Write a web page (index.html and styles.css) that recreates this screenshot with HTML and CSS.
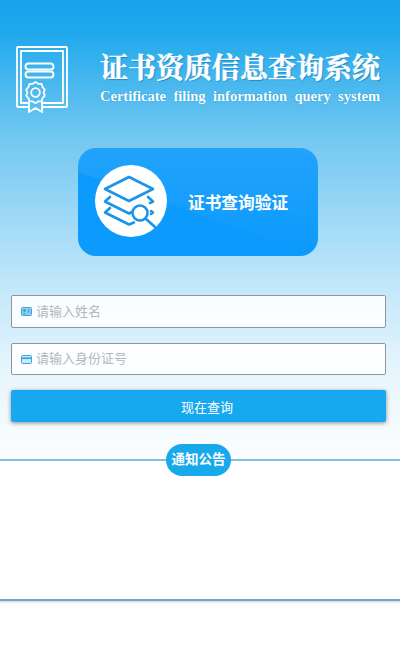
FILE: index.html
```html
<!DOCTYPE html>
<html lang="zh">
<head>
<meta charset="utf-8">
<title>证书资质信息查询系统</title>
<link rel="stylesheet" href="styles.css">
</head>
<body>
<div class="page">
  <header class="header">
    <svg class="logo" viewBox="0 0 52 67" fill="none" stroke="#fff" stroke-width="1.800" stroke-linejoin="round" stroke-linecap="round">
      <path d="M12 61H2a1 1 0 0 1-1-1V2a1 1 0 0 1 1-1h48a1 1 0 0 1 1 1v58a1 1 0 0 1-1 1H27"/>
      <path d="M12 57H5V5h42v52H27"/>
      <rect x="9.500" y="17.500" width="28" height="6" rx="3"/>
      <rect x="9.500" y="25.500" width="28" height="6" rx="3"/>
      <path d="M19.500 36l2.800 1.800 3.300.2 1 3.200 2.200 2.400-1.300 3 1.300 3-2.200 2.400-1 3.200-3.300.2-2.800 1.800-2.800-1.800-3.300-.2-1-3.200-2.200-2.400 1.300-3-1.300-3 2.200-2.400 1-3.200 3.300-.2z"/>
      <circle cx="19.500" cy="46.500" r="4.300"/>
      <path d="M13 56v10l6.500-4 6.500 4V56"/>
    </svg>
    <div class="brand">
      <h1 class="title">证书资质信息查询系统</h1>
      <p class="subtitle"><span>Certificate</span><span>filing</span><span>information</span><span>query</span><span>system</span></p>
    </div>
  </header>

  <section class="card">
    <div class="card-sheen"></div>
    <div class="card-circle">
      <svg class="card-icon" viewBox="0 0 72 72" fill="none" stroke="#1a93e8" stroke-width="2.600" stroke-linecap="round" stroke-linejoin="round">
        <path d="M34 12L58 24 34 36 10 24z"/>
        <path d="M15 32l-5 4.500 24 12 3-1.500M53 32l5 4.500-3 1.500"/>
        <path d="M15 43l-5 4.500 24 12 5-2"/>
        <circle cx="45" cy="48" r="7.500"/>
        <path d="M50.500 53.500L60 62"/>
        <path d="M56 46l2 1.500-2 1.500"/>
      </svg>
    </div>
    <div class="card-text">证书查询验证</div>
  </section>

  <form class="form">
    <label class="field">
      <svg class="field-icon" viewBox="0 0 11 9"><rect x=".5" y=".5" width="10" height="8" rx="1" fill="#8ed0ee" stroke="#3ba6dd"/><circle cx="3.500" cy="3.500" r="1.200" fill="#2a8fc6"/><path d="M2 6.800h3M6.500 3h2.500M6.500 5h2.500" stroke="#2a8fc6" stroke-width=".8"/></svg>
      <span class="placeholder">请输入姓名</span>
    </label>
    <label class="field field-short">
      <svg class="field-icon" viewBox="0 0 11 9"><rect x=".5" y=".5" width="10" height="8" rx="1.200" fill="#cdeafa" stroke="#3ba6dd"/><rect x="1" y="2.300" width="9" height="1.800" fill="#3ba6dd"/></svg>
      <span class="placeholder">请输入身份证号</span>
    </label>
    <button class="submit" type="button">现在查询</button>
  </form>

  <section class="notice">
    <div class="notice-badge">通知公告</div>
  </section>
  <div class="notice-shadow"></div>
</div>
</body>
</html>
```
FILE: styles.css
```css
html, body {
  margin: 0;
  padding: 0;
  background: #fff;
}
.page {
  width: 400px;
  height: 650px;
  overflow: hidden;
  padding-top: 46px;
  box-sizing: border-box;
  font-family: "Liberation Sans", "Noto Sans CJK SC", sans-serif;
  background: linear-gradient(180deg, #17a3ea 0, #1ea8ec 30px, #74c8f1 140px, #bfe6fa 280px, #e6f5fd 370px, #fbfdff 455px, #fff 470px);
}
.header {
  display: flex;
  align-items: flex-start;
  height: 102px;
  padding-left: 16px;
}
.logo {
  width: 52px;
  height: 67px;
  flex: none;
  overflow: visible;
}
.brand {
  margin-left: 32px;
  padding-top: 6px;
  width: 280px;
}
.title {
  margin: 0;
  font-family: "Liberation Serif", "Noto Serif CJK SC", "Noto Sans CJK SC", serif;
  font-size: 28px;
  line-height: 33px;
  font-weight: 700;
  color: #fff;
  white-space: nowrap;
  -webkit-text-stroke: .5px #fff;
  text-shadow: 1px 1px 1px rgba(10, 110, 180, .7);
}
.subtitle {
  margin: 3px 0 0;
  display: flex;
  justify-content: space-between;
  font-family: "Liberation Serif", serif;
  font-size: 14.500px;
  line-height: 17px;
  font-weight: 700;
  color: #fff;
  text-shadow: 0 0 1px #0f7fc4;
}
.card {
  position: relative;
  overflow: hidden;
  display: flex;
  align-items: center;
  box-sizing: border-box;
  width: 240px;
  height: 108px;
  margin-left: 78px;
  padding: 0 0 2px 17px;
  border-radius: 18px;
  background: #0c9afc;
}
.card-sheen {
  position: absolute;
  inset: 0;
  clip-path: polygon(0 22%, 100% 100%, 100% 0, 0 0);
  background: linear-gradient(180deg, rgba(255, 255, 255, .09), rgba(255, 255, 255, 0));
}
.card-circle {
  position: relative;
  width: 72px;
  height: 72px;
  flex: none;
  border-radius: 50%;
  background: #fff;
}
.card-icon {
  display: block;
  width: 72px;
  height: 72px;
}
.card-text {
  position: relative;
  margin-left: 21px;
  padding-top: 2px;
  font-size: 16.700px;
  font-weight: 700;
  color: #fff;
  white-space: nowrap;
}
.form {
  display: flex;
  flex-direction: column;
  margin: 39px 14px 0 11px;
}
.field {
  display: flex;
  align-items: center;
  box-sizing: border-box;
  height: 33px;
  margin-bottom: 15px;
  padding-left: 9px;
  border: 1px solid #8f9599;
  border-radius: 2px;
  background: rgba(255, 255, 255, .9);
}
.field-short {
  height: 32px;
}
.field-icon {
  width: 11px;
  height: 9px;
  flex: none;
}
.placeholder {
  margin-left: 4px;
  font-size: 13px;
  line-height: 16px;
  color: #b4b8bb;
}
.submit {
  height: 32px;
  border: 0;
  border-radius: 2px;
  background: #18a8f0;
  color: #fff;
  font-family: inherit;
  font-size: 13px;
  box-shadow: 0 1px 4px rgba(0, 0, 0, .45);
  padding: 0 0 0 17px;
}
.notice {
  position: relative;
  box-sizing: border-box;
  height: 142px;
  margin-top: 37px;
  background: #fff;
  border-top: 2px solid #7fbfe2;
  border-bottom: 2px solid #6fa9c4;
}
.notice-shadow {
  height: 3px;
  background: linear-gradient(180deg, rgba(0, 0, 0, .14), rgba(0, 0, 0, 0));
}
.notice-badge {
  position: absolute;
  left: 166px;
  top: -17px;
  width: 65px;
  height: 32px;
  border-radius: 16px;
  background: #18a8ec;
  color: #fff;
  font-size: 13.500px;
  font-weight: 700;
  line-height: 32px;
  text-align: center;
}
```
